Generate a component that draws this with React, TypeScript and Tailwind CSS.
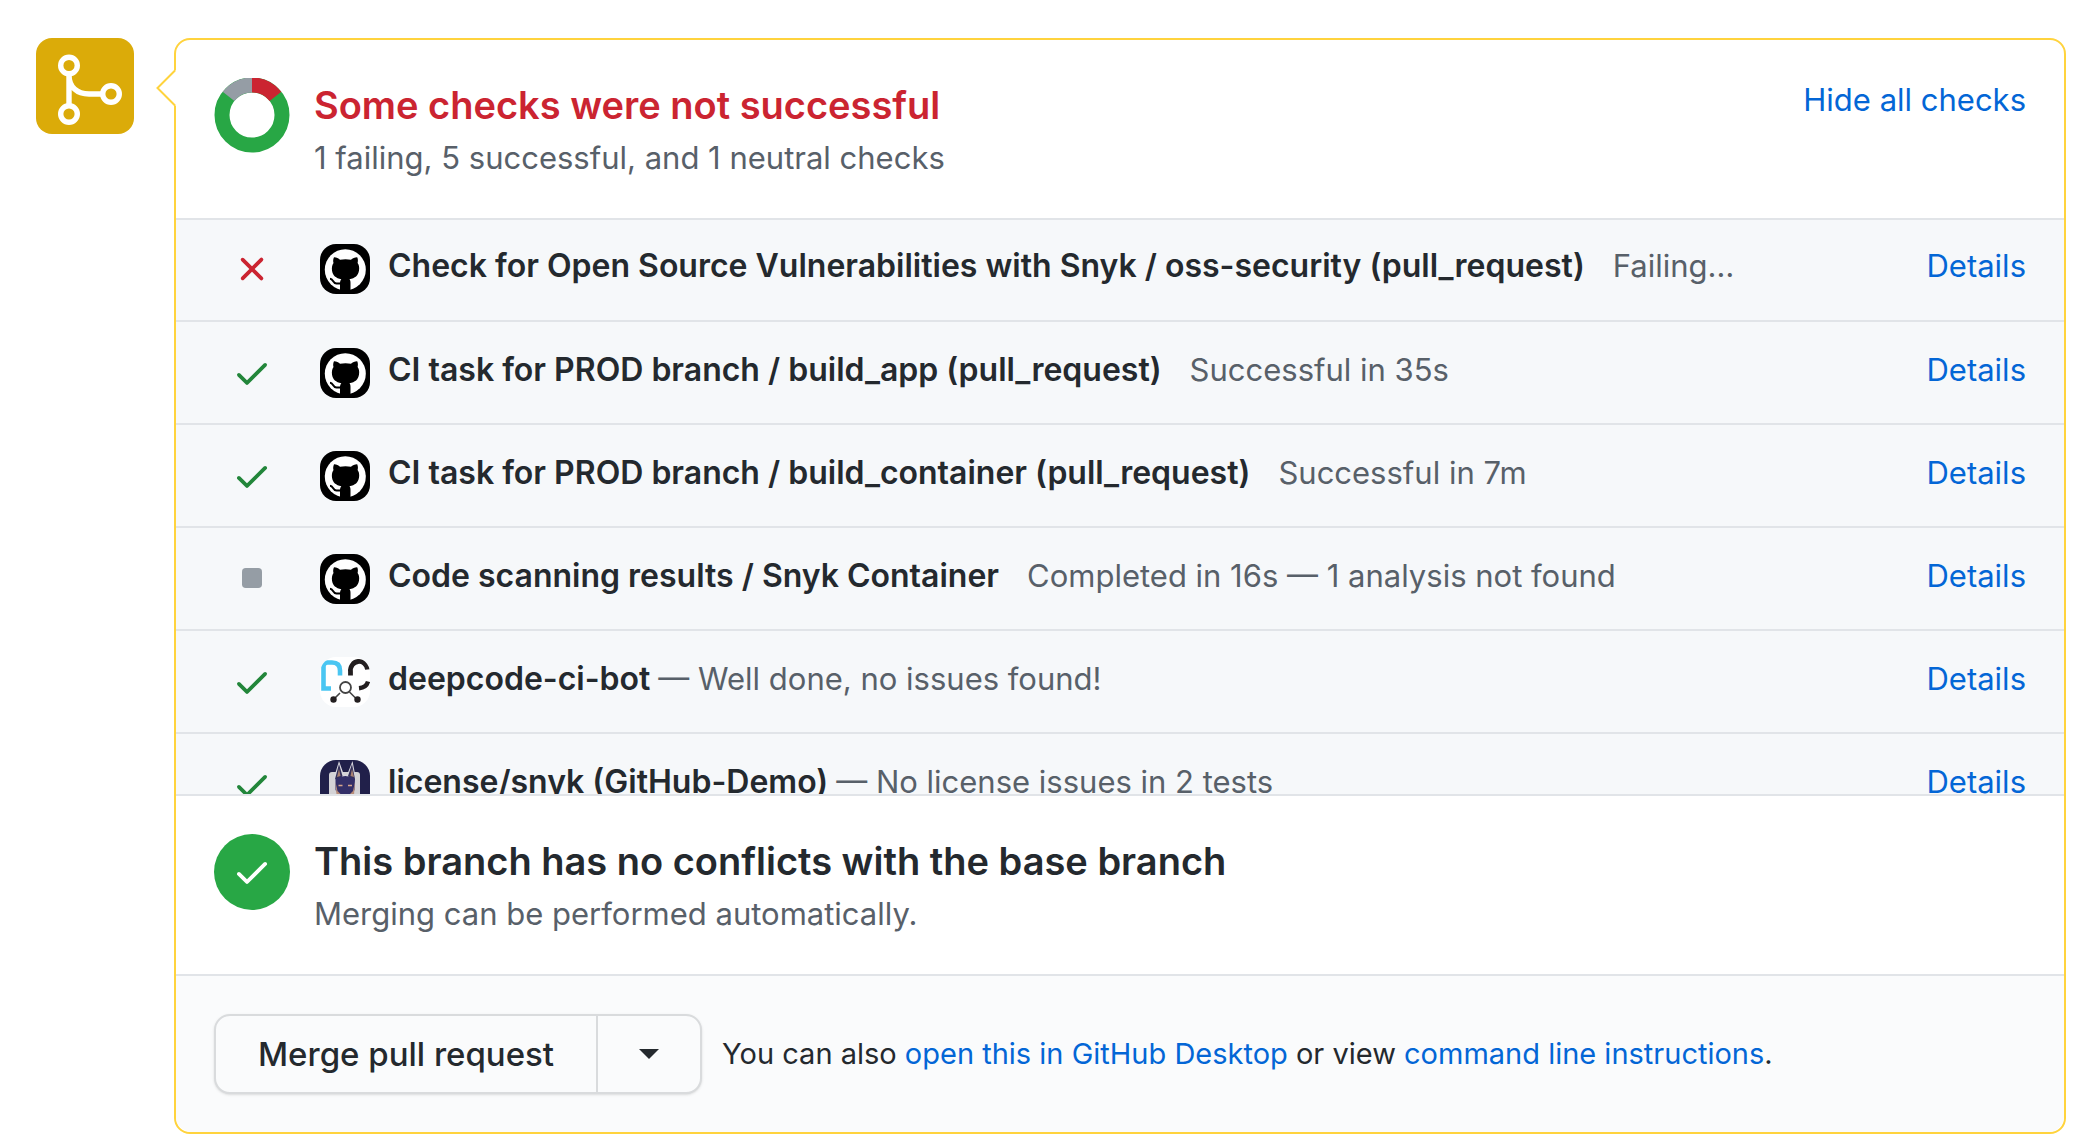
import React from "react";

type Status = "failure" | "success" | "neutral";
type Avatar = "github" | "deepcode" | "snyk";

interface Check {
  status: Status;
  avatar: Avatar;
  name: string;
  note: string;
  inline?: boolean;
}

const checks: Check[] = [
  { status: "failure", avatar: "github", name: "Check for Open Source Vulnerabilities with Snyk / oss-security (pull_request)", note: "Failing…" },
  { status: "success", avatar: "github", name: "CI task for PROD branch / build_app (pull_request)", note: "Successful in 35s" },
  { status: "success", avatar: "github", name: "CI task for PROD branch / build_container (pull_request)", note: "Successful in 7m" },
  { status: "neutral", avatar: "github", name: "Code scanning results / Snyk Container", note: "Completed in 16s — 1 analysis not found" },
  { status: "success", avatar: "deepcode", name: "deepcode-ci-bot", note: "— Well done, no issues found!", inline: true },
  { status: "success", avatar: "snyk", name: "license/snyk (GitHub-Demo)", note: "— No license issues in 2 tests", inline: true },
];

function CheckIcon({ className }: { className: string }) {
  return (
    <svg viewBox="0 0 16 16" className={className} fill="currentColor" aria-hidden="true">
      <path d="M13.78 4.22a.75.75 0 0 1 0 1.06l-7.25 7.25a.75.75 0 0 1-1.06 0L2.22 9.28a.75.75 0 0 1 1.06-1.06L6 10.94l6.72-6.72a.75.75 0 0 1 1.06 0z" />
    </svg>
  );
}

function StatusIcon({ status }: { status: Status }) {
  if (status === "success") return <CheckIcon className="size-10 text-[#22863a]" />;
  if (status === "failure")
    return (
      <svg viewBox="0 0 16 16" className="size-10 text-[#cb2431]" fill="currentColor" aria-hidden="true">
        <path d="M3.72 3.72a.75.75 0 0 1 1.06 0L8 6.94l3.22-3.22a.75.75 0 1 1 1.06 1.06L9.06 8l3.22 3.22a.75.75 0 1 1-1.06 1.06L8 9.06l-3.22 3.22a.75.75 0 0 1-1.06-1.06L6.94 8 3.72 4.78a.75.75 0 0 1 0-1.06z" />
      </svg>
    );
  return (
    <svg viewBox="0 0 16 16" className="size-10 text-[#959da5]" fill="currentColor" aria-hidden="true">
      <rect x="4" y="3.6" width="8" height="8" rx="1.5" />
    </svg>
  );
}

function AvatarIcon({ kind }: { kind: Avatar }) {
  if (kind === "github")
    return (
      <svg viewBox="0 0 50 50" className="size-[50px] shrink-0 rounded-2xl bg-black" aria-hidden="true">
        <circle cx="25.3" cy="25.7" r="20.5" fill="#fff" />
        <path
          d="M14 13.300C16.500 13.200 18.500 14.600 20 15.800C23.500 15 27.500 15 31 15.800C32.500 14.600 35 13.200 37.200 13.300C38.200 15.500 38 17.500 37.600 19C39 21 39.500 23.200 39 26.500C38.300 31.500 35 34.300 29.500 35.200C30.500 36.500 30.500 38 30.500 39.500V47H20V39.500C20 38 20.200 36.500 21.300 35.200C16 34.300 12.600 31.500 12 26.500C11.600 23.200 12.200 21 13.500 19C13 17.500 13 15.500 14 13.300Z"
          fill="#000"
        />
        <path d="M10 34.800C13.500 34.800 12.500 39.300 16.500 39.600H21" fill="none" stroke="#000" strokeWidth="2" />
      </svg>
    );
  if (kind === "deepcode")
    return (
      <svg viewBox="0 0 50 50" className="size-[50px] shrink-0 rounded-2xl bg-white" fill="none" aria-hidden="true">
        <path d="M11 31.500H3.500V9.500q0-4 4-4h4.500q8 0 8 8v5" stroke="#4ac6f2" strokeWidth="4.600" />
        <path d="M30.500 18.500v-4a8.500 9 0 0 1 17-2" stroke="#231f20" strokeWidth="4.800" />
        <path d="M48 24.500q-1.500 6-9 6.800" stroke="#231f20" strokeWidth="4.400" />
        <circle cx="25.500" cy="30.500" r="5.500" stroke="#444" strokeWidth="1.800" />
        <path d="M20 36l-6 6M29.500 35l7 7" stroke="#444" strokeWidth="1.600" />
        <circle cx="13.500" cy="42.500" r="3.200" fill="#231f20" />
        <circle cx="37.500" cy="42.500" r="3.200" fill="#231f20" />
      </svg>
    );
  return (
    <svg viewBox="0 0 50 50" className="size-[50px] shrink-0 rounded-2xl bg-[#21204a]" aria-hidden="true">
      <path d="M9 15q0-3 3-3h25q3 0 3 3v35H9z" fill="#d4d3d6" />
      <path d="M13.500 19L19 1l5 14h3L32.500 1 36 19z" fill="#d8d7de" />
      <path d="M15 19l4-15 3.500 12-3 4zM35 19L32 4l-4 12 3 4z" fill="#34305a" />
      <path d="M17 17l2-8 1.500 7zM30.500 16l1.500-7 2 8z" fill="#a98272" />
      <path d="M15.500 19q10-6 19.500 0l-.5 11L31 36v14H20V36l-4.500-6z" fill="#332f68" />
      <path d="M15.500 22l2 9 4 4v6l-5-6zM35 22l-2 9-4 4v6l5-6z" fill="#b98d78" />
      <path d="M18.500 25.500h4M28 25.500h4" stroke="#d8a68c" strokeWidth="1.400" />
    </svg>
  );
}

function MergeBadge() {
  return (
    <div className="h-24 w-[98px] shrink-0 rounded-2xl bg-[#dbab09]">
      <svg viewBox="0 0 98 96" className="size-full" fill="none" stroke="#fff" strokeWidth="5.400" aria-label="Merge" role="img">
        <circle cx="33" cy="27.500" r="8.300" />
        <circle cx="33" cy="76" r="8.300" />
        <circle cx="75" cy="56" r="8.300" />
        <path d="M33 36v31M33 37c0 12 8 19 20 19h13" />
      </svg>
    </div>
  );
}

function Donut() {
  return (
    <svg viewBox="0 0 76 76" className="size-[76px] shrink-0" fill="none" strokeWidth="15" aria-hidden="true">
      <circle cx="38" cy="37" r="30" stroke="#28a745" />
      <path d="M38 7A30 30 0 0 1 61.460 18.300" stroke="#cb2431" />
      <path d="M14.540 18.300A30 30 0 0 1 38 7" stroke="#959da5" />
    </svg>
  );
}

const link = "text-[#0366d6] hover:underline";

export default function App() {
  return (
    <main className="flex min-h-screen items-start gap-10 bg-white pt-[38px] pr-3 pl-9 font-['Inter',sans-serif] text-[31px] leading-[44px] text-[#24292e]">
      <MergeBadge />
      <section className="relative min-w-0 flex-1 rounded-2xl border-2 border-[#ffd33d] bg-white">
        <svg viewBox="0 0 20 38" className="absolute top-[29px] -left-5 h-[38px] w-5" aria-hidden="true">
          <path d="M20 1L2 19l18 18z" fill="#fff" />
          <path d="M19 1.500L1.500 19 19 36.500" fill="none" stroke="#ffd33d" strokeWidth="2" />
        </svg>

        <header className="flex items-start gap-6 border-b-2 border-[#e1e4e8] px-[38px] pt-[38px] pb-[34px]">
          <Donut />
          <div className="min-w-0 flex-1">
            <h2 className="text-[38px] leading-[54px] font-semibold text-[#cb2431]">Some checks were not successful</h2>
            <p className="leading-[52px] text-[#586069]">1 failing, 5 successful, and 1 neutral checks</p>
          </div>
          <button type="button" className={link}>
            Hide all checks
          </button>
        </header>

        <ul className="h-[574px] overflow-y-auto bg-[#f6f8fa] [scrollbar-width:none]">
          {checks.map((check) => (
            <li
              key={check.name}
              className="flex h-[103px] items-start border-b-2 border-[#e1e4e8] px-[38px] pt-[26px] first:h-[102px] first:pt-6"
            >
              <span className="flex h-[50px] w-[76px] shrink-0 items-center justify-center">
                <StatusIcon status={check.status} />
              </span>
              <span className="ml-[30px]">
                <AvatarIcon kind={check.avatar} />
              </span>
              <p className="ml-[18px] min-w-0 flex-1 truncate text-[#586069]">
                <strong
                  className={
                    check.inline
                      ? "mr-2 text-[32px] font-semibold text-[#24292e]"
                      : "mr-7 text-[32px] font-semibold text-[#24292e]"
                  }
                >
                  {check.name}
                </strong>
                {check.note}
              </p>
              <a href="#details" className={link}>
                Details
              </a>
            </li>
          ))}
        </ul>

        <section className="flex items-start gap-6 border-y-2 border-[#e1e4e8] px-[38px] pt-[38px] pb-[34px]">
          <span className="flex size-[76px] shrink-0 items-center justify-center rounded-full bg-[#28a745] text-white">
            <CheckIcon className="size-10" />
          </span>
          <div>
            <h2 className="text-[38px] leading-[54px] font-semibold">This branch has no conflicts with the base branch</h2>
            <p className="leading-[52px] text-[#586069]">Merging can be performed automatically.</p>
          </div>
        </section>

        <footer className="flex items-center gap-5 rounded-b-2xl bg-[#fafbfc] p-[38px]">
          <div className="flex h-20 shrink-0 rounded-2xl border-2 border-[#d9dbdd] bg-[#fafbfc] shadow-sm">
            <button type="button" className="border-r-2 border-[#d9dbdd] px-[42px] text-[33px] font-medium">
              Merge pull request
            </button>
            <button type="button" aria-label="Select merge method" className="flex w-[102px] items-center justify-center">
              <svg viewBox="0 0 20 10" className="h-[10px] w-5" fill="currentColor" aria-hidden="true">
                <path d="M0 0h20L10 10z" />
              </svg>
            </button>
          </div>
          <p className="text-[29px]">
            You can also <a href="#desktop" className={link}>open this in GitHub Desktop</a> or view{" "}
            <a href="#cli" className={link}>command line instructions</a>.
          </p>
        </footer>
      </section>
    </main>
  );
}
